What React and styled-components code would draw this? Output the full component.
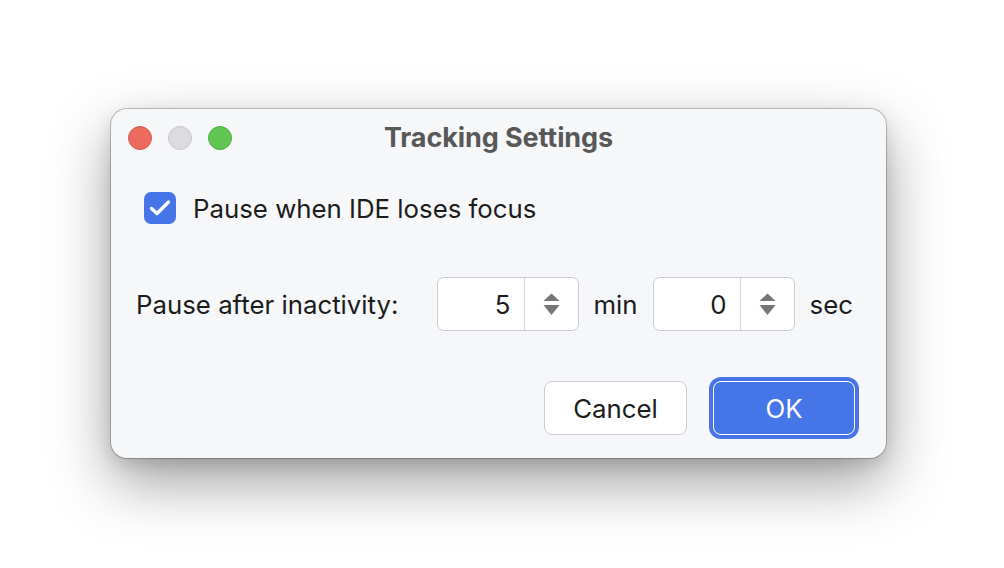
import React, { useState } from 'react';
import styled, { createGlobalStyle } from 'styled-components';

const GlobalStyle = createGlobalStyle`
    html, body {
        margin: 0;
        padding: 0;
        background: #ffffff;
    }
    body {
        font-family: Inter, "Liberation Sans", sans-serif;
        -webkit-font-smoothing: antialiased;
    }
`

const Page = styled.div`
    width: 1004px;
    height: 568px;
    box-sizing: border-box;
    padding: 109px 0 0 111px;
    overflow: hidden;
`

const Window = styled.div`
    width: 775px;
    height: 349px;
    box-sizing: border-box;
    background: #f6f7f9;
    border-radius: 16px;
    box-shadow: 0 0 0 1px rgba(0, 0, 0, 0.22), 0 24px 60px rgba(0, 0, 0, 0.38), 0 6px 16px rgba(0, 0, 0, 0.12);
    display: flex;
    flex-direction: column;
`

const TitleBar = styled.div`
    height: 58px;
    display: grid;
    grid-template-columns: 1fr auto 1fr;
    align-items: center;
    padding: 0 17px;
`

const Lights = styled.div`
    display: flex;
    gap: 16px;
`

const Light = styled.span`
    width: 24px;
    height: 24px;
    border-radius: 50%;
    box-sizing: border-box;
    background: ${p => p.color};
    border: 1px solid ${p => p.edge};
`

const Title = styled.div`
    font-size: 27px;
    font-weight: 700;
    color: #585858;
    letter-spacing: -0.1px;
    margin-top: -2px;
`

const Body = styled.div`
    flex: 1;
    display: flex;
    flex-direction: column;
    padding: 25px 20px 23px 25px;
    font-size: 25.8px;
    color: #1c1c1c;
    white-space: nowrap;
`

const CheckRow = styled.label`
    display: flex;
    align-items: center;
    gap: 17px;
    margin-left: 8px;
    cursor: pointer;
`

const Box = styled.span`
    width: 32px;
    height: 32px;
    border-radius: 7px;
    background: ${p => (p.checked ? '#4675e8' : '#ffffff')};
    border: ${p => (p.checked ? 'none' : '1px solid #c8cad2')};
    box-sizing: border-box;
    display: flex;
    align-items: center;
    justify-content: center;
`

const InactivityRow = styled.div`
    display: flex;
    align-items: center;
    margin-top: 53px;
    & > * {
        flex-shrink: 0;
    }
`

const Label = styled.span`
    margin-right: 38px;
`

const Unit = styled.span`
    margin: 0 15px;
`

const Spinner = styled.div`
    width: 142px;
    height: 54px;
    box-sizing: border-box;
    background: #ffffff;
    border: 1.5px solid #c9cbd3;
    border-radius: 7px;
    display: flex;
`

const SpinValue = styled.div`
    width: 87px;
    box-sizing: border-box;
    padding-right: 13px;
    display: flex;
    align-items: center;
    justify-content: flex-end;
    border-right: 1.5px solid #d3d5dc;
`

const SpinArrows = styled.div`
    flex: 1;
    display: flex;
    align-items: center;
    justify-content: center;
`

const Buttons = styled.div`
    margin-top: auto;
    margin-right: 7px;
    display: flex;
    justify-content: flex-end;
    align-items: center;
    gap: 26px;
`

const Button = styled.button`
    width: ${p => (p.primary ? '142px' : '143px')};
    height: 54px;
    box-sizing: border-box;
    border-radius: 8px;
    font-family: inherit;
    font-size: 25.8px;
    cursor: pointer;
    background: ${p => (p.primary ? '#4675e8' : '#ffffff')};
    color: ${p => (p.primary ? '#ffffff' : '#1c1c1c')};
    border: ${p => (p.primary ? '1.5px solid #ffffff' : '1.5px solid #c9cbd3')};
    box-shadow: ${p => (p.primary ? '0 0 0 4px #4675e8' : 'none')};
    margin-right: ${p => (p.primary ? '4px' : '0')};
`

const Arrows = () => (
    <svg width="17" height="23" viewBox="0 0 17 23">
        <path d="M8.5 0.5 L16.5 8 L0.5 8 Z" fill="#767676" />
        <path d="M0.5 12 L16.5 12 L8.5 22 Z" fill="#767676" />
    </svg>
)

const Check = () => (
    <svg width="22" height="18" viewBox="0 0 22 18">
        <path d="M2.5 9.5 L8 14.5 L19.5 3" fill="none" stroke="#ffffff" strokeWidth="3.4" strokeLinecap="round" strokeLinejoin="round" />
    </svg>
)

const NumberSpinner = ({ value }) => (
    <Spinner>
        <SpinValue>{value}</SpinValue>
        <SpinArrows>
            <Arrows />
        </SpinArrows>
    </Spinner>
)

const App = () => {
    const [paused, setPaused] = useState(true);

    return (
        <>
            <GlobalStyle />
            <Page>
                <Window>
                    <TitleBar>
                        <Lights>
                            <Light color="#ec6a5e" edge="#d35a50" />
                            <Light color="#dcdcde" edge="#c9c9cc" />
                            <Light color="#61c554" edge="#52ac46" />
                        </Lights>
                        <Title>Tracking Settings</Title>
                        <div />
                    </TitleBar>
                    <Body>
                        <CheckRow onClick={() => setPaused(prev => !prev)}>
                            <Box checked={paused}>{paused && <Check />}</Box>
                            Pause when IDE loses focus
                        </CheckRow>
                        <InactivityRow>
                            <Label>Pause after inactivity:</Label>
                            <NumberSpinner value="5" />
                            <Unit>min</Unit>
                            <NumberSpinner value="0" />
                            <Unit>sec</Unit>
                        </InactivityRow>
                        <Buttons>
                            <Button>Cancel</Button>
                            <Button primary>OK</Button>
                        </Buttons>
                    </Body>
                </Window>
            </Page>
        </>
    )
}

export default App;
